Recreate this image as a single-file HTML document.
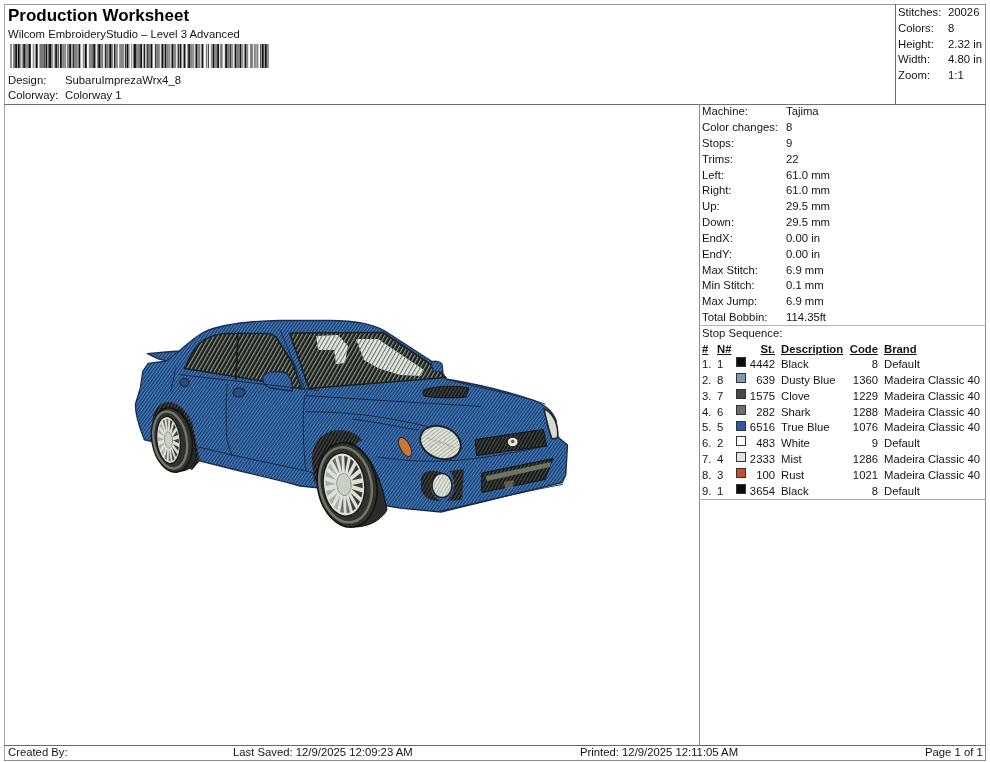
<!DOCTYPE html>
<html><head><meta charset="utf-8">
<style>
html,body{margin:0;padding:0;background:#fff;}
body{width:990px;height:762px;position:relative;overflow:hidden;will-change:transform;font-family:"Liberation Sans",sans-serif;font-size:11.3px;color:#141414;}
.ln{position:absolute;background:#7a7a7a;}
.t{position:absolute;white-space:pre;line-height:13px;}
.r{text-align:right;}
.b{font-weight:bold;text-decoration:underline;}
.sw{position:absolute;left:736px;width:8px;height:8px;border:1px solid #333;}
#car{position:absolute;left:0;top:0;}
</style></head><body>
<!-- frame lines -->
<div class="ln" style="left:4px;top:4px;width:982px;height:1px;background:#9a9a9a"></div>
<div class="ln" style="left:4px;top:4px;width:1px;height:757px;background:#a8a8a8"></div>
<div class="ln" style="left:985px;top:4px;width:1px;height:757px;background:#8c8c8c"></div>
<div class="ln" style="left:4px;top:760px;width:982px;height:1px;background:#8c8c8c"></div>
<div class="ln" style="left:4px;top:104px;width:982px;height:1px;background:#707070"></div>
<div class="ln" style="left:895px;top:4px;width:1px;height:100px;background:#6a6a6a"></div>
<div class="ln" style="left:699px;top:104px;width:1px;height:641px;background:#8c8c8c"></div>
<div class="ln" style="left:4px;top:745px;width:982px;height:1px;background:#6a6a6a"></div>
<div class="ln" style="left:699px;top:325px;width:287px;height:1px;background:#b4b4b4"></div>
<div class="ln" style="left:699px;top:499px;width:287px;height:1px;background:#a8a8a8"></div>

<!-- header -->
<div class="t" style="left:8px;top:6px;font-size:17px;font-weight:bold;line-height:20px;color:#000">Production Worksheet</div>
<div class="t" style="left:8px;top:28px;">Wilcom EmbroideryStudio – Level 3 Advanced</div>
<svg id="barcode" style="position:absolute;left:8px;top:44px;" width="270" height="24"><rect x="2" width="1" height="24" fill="#8c8c8c"/><rect x="3" width="1" height="24" fill="#969696"/><rect x="5" width="1" height="24" fill="#8c8c8c"/><rect x="6" width="1" height="24" fill="#787878"/><rect x="7" width="1" height="24" fill="#3c3c3c"/><rect x="8" width="1" height="24" fill="#141414"/><rect x="9" width="1" height="24" fill="#aaaaaa"/><rect x="10" width="1" height="24" fill="#0a0a0a"/><rect x="11" width="1" height="24" fill="#505050"/><rect x="12" width="1" height="24" fill="#a0a0a0"/><rect x="13" width="1" height="24" fill="#c8c8c8"/><rect x="14" width="1" height="24" fill="#969696"/><rect x="15" width="1" height="24" fill="#464646"/><rect x="16" width="1" height="24" fill="#1e1e1e"/><rect x="17" width="1" height="24" fill="#787878"/><rect x="18" width="2" height="24" fill="#8c8c8c"/><rect x="20" width="1" height="24" fill="#6e6e6e"/><rect x="21" width="1" height="24" fill="#141414"/><rect x="22" width="1" height="24" fill="#3c3c3c"/><rect x="24" width="1" height="24" fill="#dcdcdc"/><rect x="25" width="1" height="24" fill="#969696"/><rect x="26" width="1" height="24" fill="#d2d2d2"/><rect x="27" width="1" height="24" fill="#969696"/><rect x="28" width="1" height="24" fill="#141414"/><rect x="29" width="1" height="24" fill="#505050"/><rect x="31" width="1" height="24" fill="#aaaaaa"/><rect x="32" width="1" height="24" fill="#787878"/><rect x="33" width="1" height="24" fill="#6e6e6e"/><rect x="34" width="1" height="24" fill="#828282"/><rect x="35" width="1" height="24" fill="#787878"/><rect x="36" width="1" height="24" fill="#464646"/><rect x="37" width="1" height="24" fill="#828282"/><rect x="38" width="1" height="24" fill="#141414"/><rect x="39" width="1" height="24" fill="#a0a0a0"/><rect x="40" width="1" height="24" fill="#6e6e6e"/><rect x="41" width="1" height="24" fill="#1e1e1e"/><rect x="42" width="1" height="24" fill="#141414"/><rect x="43" width="1" height="24" fill="#828282"/><rect x="44" width="1" height="24" fill="#969696"/><rect x="45" width="1" height="24" fill="#e6e6e6"/><rect x="46" width="1" height="24" fill="#aaaaaa"/><rect x="47" width="1" height="24" fill="#3c3c3c"/><rect x="48" width="1" height="24" fill="#1e1e1e"/><rect x="49" width="1" height="24" fill="#969696"/><rect x="50" width="1" height="24" fill="#646464"/><rect x="51" width="1" height="24" fill="#e6e6e6"/><rect x="52" width="1" height="24" fill="#141414"/><rect x="53" width="1" height="24" fill="#3c3c3c"/><rect x="54" width="1" height="24" fill="#969696"/><rect x="55" width="1" height="24" fill="#828282"/><rect x="56" width="1" height="24" fill="#969696"/><rect x="57" width="1" height="24" fill="#828282"/><rect x="58" width="1" height="24" fill="#e6e6e6"/><rect x="59" width="1" height="24" fill="#828282"/><rect x="60" width="1" height="24" fill="#8c8c8c"/><rect x="61" width="1" height="24" fill="#3c3c3c"/><rect x="62" width="1" height="24" fill="#141414"/><rect x="63" width="1" height="24" fill="#aaaaaa"/><rect x="64" width="1" height="24" fill="#969696"/><rect x="65" width="1" height="24" fill="#323232"/><rect x="66" width="3" height="24" fill="#828282"/><rect x="69" width="1" height="24" fill="#969696"/><rect x="70" width="1" height="24" fill="#828282"/><rect x="71" width="1" height="24" fill="#141414"/><rect x="72" width="1" height="24" fill="#aaaaaa"/><rect x="74" width="1" height="24" fill="#dcdcdc"/><rect x="75" width="1" height="24" fill="#8c8c8c"/><rect x="76" width="1" height="24" fill="#a0a0a0"/><rect x="77" width="1" height="24" fill="#141414"/><rect x="78" width="1" height="24" fill="#3c3c3c"/><rect x="80" width="1" height="24" fill="#e6e6e6"/><rect x="81" width="1" height="24" fill="#828282"/><rect x="82" width="1" height="24" fill="#8c8c8c"/><rect x="83" width="1" height="24" fill="#828282"/><rect x="84" width="1" height="24" fill="#787878"/><rect x="85" width="1" height="24" fill="#464646"/><rect x="86" width="1" height="24" fill="#141414"/><rect x="87" width="1" height="24" fill="#969696"/><rect x="88" width="1" height="24" fill="#e6e6e6"/><rect x="89" width="1" height="24" fill="#969696"/><rect x="90" width="1" height="24" fill="#3c3c3c"/><rect x="91" width="1" height="24" fill="#141414"/><rect x="92" width="1" height="24" fill="#787878"/><rect x="93" width="1" height="24" fill="#8c8c8c"/><rect x="94" width="1" height="24" fill="#787878"/><rect x="95" width="1" height="24" fill="#e6e6e6"/><rect x="96" width="1" height="24" fill="#c8c8c8"/><rect x="97" width="1" height="24" fill="#282828"/><rect x="98" width="2" height="24" fill="#787878"/><rect x="100" width="1" height="24" fill="#969696"/><rect x="101" width="1" height="24" fill="#505050"/><rect x="102" width="1" height="24" fill="#141414"/><rect x="103" width="1" height="24" fill="#6e6e6e"/><rect x="104" width="1" height="24" fill="#8c8c8c"/><rect x="105" width="1" height="24" fill="#e6e6e6"/><rect x="106" width="1" height="24" fill="#282828"/><rect x="107" width="1" height="24" fill="#787878"/><rect x="108" width="1" height="24" fill="#8c8c8c"/><rect x="109" width="1" height="24" fill="#969696"/><rect x="111" width="1" height="24" fill="#969696"/><rect x="112" width="1" height="24" fill="#8c8c8c"/><rect x="113" width="1" height="24" fill="#828282"/><rect x="114" width="2" height="24" fill="#8c8c8c"/><rect x="116" width="1" height="24" fill="#dcdcdc"/><rect x="117" width="1" height="24" fill="#323232"/><rect x="118" width="1" height="24" fill="#828282"/><rect x="119" width="1" height="24" fill="#141414"/><rect x="120" width="1" height="24" fill="#828282"/><rect x="121" width="1" height="24" fill="#b4b4b4"/><rect x="123" width="1" height="24" fill="#969696"/><rect x="124" width="1" height="24" fill="#dcdcdc"/><rect x="125" width="1" height="24" fill="#828282"/><rect x="126" width="1" height="24" fill="#141414"/><rect x="127" width="1" height="24" fill="#1e1e1e"/><rect x="128" width="1" height="24" fill="#828282"/><rect x="129" width="1" height="24" fill="#8c8c8c"/><rect x="130" width="2" height="24" fill="#828282"/><rect x="132" width="1" height="24" fill="#3c3c3c"/><rect x="133" width="1" height="24" fill="#141414"/><rect x="134" width="1" height="24" fill="#dcdcdc"/><rect x="135" width="1" height="24" fill="#969696"/><rect x="136" width="1" height="24" fill="#1e1e1e"/><rect x="137" width="1" height="24" fill="#c8c8c8"/><rect x="138" width="1" height="24" fill="#a0a0a0"/><rect x="139" width="1" height="24" fill="#3c3c3c"/><rect x="140" width="1" height="24" fill="#787878"/><rect x="141" width="1" height="24" fill="#828282"/><rect x="142" width="1" height="24" fill="#6e6e6e"/><rect x="143" width="1" height="24" fill="#141414"/><rect x="144" width="1" height="24" fill="#8c8c8c"/><rect x="146" width="1" height="24" fill="#dcdcdc"/><rect x="147" width="1" height="24" fill="#3c3c3c"/><rect x="148" width="1" height="24" fill="#8c8c8c"/><rect x="149" width="1" height="24" fill="#787878"/><rect x="150" width="1" height="24" fill="#828282"/><rect x="151" width="1" height="24" fill="#969696"/><rect x="152" width="1" height="24" fill="#e6e6e6"/><rect x="153" width="1" height="24" fill="#787878"/><rect x="154" width="1" height="24" fill="#141414"/><rect x="155" width="1" height="24" fill="#828282"/><rect x="156" width="1" height="24" fill="#969696"/><rect x="157" width="1" height="24" fill="#141414"/><rect x="158" width="1" height="24" fill="#8c8c8c"/><rect x="159" width="1" height="24" fill="#828282"/><rect x="160" width="1" height="24" fill="#969696"/><rect x="161" width="1" height="24" fill="#8c8c8c"/><rect x="162" width="1" height="24" fill="#c8c8c8"/><rect x="163" width="1" height="24" fill="#828282"/><rect x="164" width="1" height="24" fill="#141414"/><rect x="165" width="1" height="24" fill="#787878"/><rect x="166" width="1" height="24" fill="#8c8c8c"/><rect x="167" width="1" height="24" fill="#828282"/><rect x="168" width="1" height="24" fill="#e6e6e6"/><rect x="169" width="1" height="24" fill="#a0a0a0"/><rect x="170" width="1" height="24" fill="#323232"/><rect x="171" width="1" height="24" fill="#969696"/><rect x="172" width="1" height="24" fill="#141414"/><rect x="173" width="1" height="24" fill="#8c8c8c"/><rect x="174" width="1" height="24" fill="#e6e6e6"/><rect x="175" width="1" height="24" fill="#8c8c8c"/><rect x="176" width="1" height="24" fill="#141414"/><rect x="177" width="1" height="24" fill="#828282"/><rect x="179" width="1" height="24" fill="#a0a0a0"/><rect x="180" width="1" height="24" fill="#3c3c3c"/><rect x="181" width="1" height="24" fill="#1e1e1e"/><rect x="182" width="1" height="24" fill="#8c8c8c"/><rect x="183" width="1" height="24" fill="#828282"/><rect x="184" width="1" height="24" fill="#969696"/><rect x="185" width="1" height="24" fill="#8c8c8c"/><rect x="186" width="1" height="24" fill="#dcdcdc"/><rect x="187" width="1" height="24" fill="#787878"/><rect x="188" width="1" height="24" fill="#141414"/><rect x="189" width="1" height="24" fill="#828282"/><rect x="190" width="1" height="24" fill="#8c8c8c"/><rect x="191" width="1" height="24" fill="#828282"/><rect x="192" width="1" height="24" fill="#d2d2d2"/><rect x="193" width="1" height="24" fill="#8c8c8c"/><rect x="194" width="1" height="24" fill="#141414"/><rect x="195" width="1" height="24" fill="#969696"/><rect x="197" width="1" height="24" fill="#e6e6e6"/><rect x="198" width="1" height="24" fill="#787878"/><rect x="199" width="1" height="24" fill="#c8c8c8"/><rect x="200" width="1" height="24" fill="#464646"/><rect x="202" width="1" height="24" fill="#e6e6e6"/><rect x="203" width="1" height="24" fill="#8c8c8c"/><rect x="204" width="1" height="24" fill="#828282"/><rect x="205" width="1" height="24" fill="#141414"/><rect x="206" width="1" height="24" fill="#787878"/><rect x="207" width="1" height="24" fill="#8c8c8c"/><rect x="208" width="1" height="24" fill="#828282"/><rect x="209" width="1" height="24" fill="#3c3c3c"/><rect x="210" width="1" height="24" fill="#141414"/><rect x="211" width="1" height="24" fill="#dcdcdc"/><rect x="212" width="1" height="24" fill="#8c8c8c"/><rect x="213" width="1" height="24" fill="#828282"/><rect x="214" width="1" height="24" fill="#a0a0a0"/><rect x="216" width="1" height="24" fill="#dcdcdc"/><rect x="217" width="1" height="24" fill="#3c3c3c"/><rect x="218" width="1" height="24" fill="#141414"/><rect x="219" width="1" height="24" fill="#828282"/><rect x="220" width="1" height="24" fill="#787878"/><rect x="221" width="1" height="24" fill="#8c8c8c"/><rect x="222" width="1" height="24" fill="#3c3c3c"/><rect x="223" width="2" height="24" fill="#969696"/><rect x="225" width="1" height="24" fill="#e6e6e6"/><rect x="226" width="1" height="24" fill="#969696"/><rect x="227" width="1" height="24" fill="#141414"/><rect x="228" width="1" height="24" fill="#787878"/><rect x="229" width="1" height="24" fill="#828282"/><rect x="230" width="1" height="24" fill="#787878"/><rect x="231" width="1" height="24" fill="#828282"/><rect x="232" width="1" height="24" fill="#141414"/><rect x="233" width="1" height="24" fill="#8c8c8c"/><rect x="234" width="1" height="24" fill="#969696"/><rect x="235" width="1" height="24" fill="#d2d2d2"/><rect x="236" width="1" height="24" fill="#8c8c8c"/><rect x="237" width="1" height="24" fill="#141414"/><rect x="238" width="1" height="24" fill="#828282"/><rect x="239" width="1" height="24" fill="#8c8c8c"/><rect x="240" width="1" height="24" fill="#dcdcdc"/><rect x="242" width="1" height="24" fill="#828282"/><rect x="243" width="1" height="24" fill="#787878"/><rect x="244" width="1" height="24" fill="#8c8c8c"/><rect x="245" width="1" height="24" fill="#e6e6e6"/><rect x="246" width="1" height="24" fill="#828282"/><rect x="247" width="1" height="24" fill="#969696"/><rect x="248" width="1" height="24" fill="#aaaaaa"/><rect x="249" width="1" height="24" fill="#828282"/><rect x="250" width="1" height="24" fill="#d2d2d2"/><rect x="252" width="1" height="24" fill="#5a5a5a"/><rect x="253" width="1" height="24" fill="#969696"/><rect x="254" width="1" height="24" fill="#141414"/><rect x="255" width="1" height="24" fill="#505050"/><rect x="256" width="1" height="24" fill="#a0a0a0"/><rect x="257" width="1" height="24" fill="#0a0a0a"/><rect x="258" width="1" height="24" fill="#505050"/><rect x="259" width="1" height="24" fill="#8c8c8c"/><rect x="260" width="1" height="24" fill="#969696"/></svg>
<div class="t" style="left:8px;top:74px;">Design:</div>
<div class="t" style="left:65px;top:74px;">SubaruImprezaWrx4_8</div>
<div class="t" style="left:8px;top:89px;">Colorway:</div>
<div class="t" style="left:65px;top:89px;">Colorway 1</div>

<div class="t" style="left:898px;top:6.1px;">Stitches:</div><div class="t" style="left:948px;top:6.1px;">20026</div>
<div class="t" style="left:898px;top:22px;">Colors:</div><div class="t" style="left:948px;top:22px;">8</div>
<div class="t" style="left:898px;top:37.7px;">Height:</div><div class="t" style="left:948px;top:37.7px;">2.32 in</div>
<div class="t" style="left:898px;top:53.1px;">Width:</div><div class="t" style="left:948px;top:53.1px;">4.80 in</div>
<div class="t" style="left:898px;top:69px;">Zoom:</div><div class="t" style="left:948px;top:69px;">1:1</div>

<!-- right panel -->
<div class="t" style="left:702px;top:105px;">Machine:</div><div class="t" style="left:786px;top:105px;">Tajima</div>
<div class="t" style="left:702px;top:121px;">Color changes:</div><div class="t" style="left:786px;top:121px;">8</div>
<div class="t" style="left:702px;top:137px;">Stops:</div><div class="t" style="left:786px;top:137px;">9</div>
<div class="t" style="left:702px;top:153px;">Trims:</div><div class="t" style="left:786px;top:153px;">22</div>
<div class="t" style="left:702px;top:169px;">Left:</div><div class="t" style="left:786px;top:169px;">61.0 mm</div>
<div class="t" style="left:702px;top:184px;">Right:</div><div class="t" style="left:786px;top:184px;">61.0 mm</div>
<div class="t" style="left:702px;top:200px;">Up:</div><div class="t" style="left:786px;top:200px;">29.5 mm</div>
<div class="t" style="left:702px;top:216px;">Down:</div><div class="t" style="left:786px;top:216px;">29.5 mm</div>
<div class="t" style="left:702px;top:232px;">EndX:</div><div class="t" style="left:786px;top:232px;">0.00 in</div>
<div class="t" style="left:702px;top:248px;">EndY:</div><div class="t" style="left:786px;top:248px;">0.00 in</div>
<div class="t" style="left:702px;top:264px;">Max Stitch:</div><div class="t" style="left:786px;top:264px;">6.9 mm</div>
<div class="t" style="left:702px;top:279px;">Min Stitch:</div><div class="t" style="left:786px;top:279px;">0.1 mm</div>
<div class="t" style="left:702px;top:295px;">Max Jump:</div><div class="t" style="left:786px;top:295px;">6.9 mm</div>
<div class="t" style="left:702px;top:311px;">Total Bobbin:</div><div class="t" style="left:786px;top:311px;">114.35ft</div>
<div class="t" style="left:702px;top:327px;">Stop Sequence:</div>
<div class="t b" style="left:702px;top:343px;">#</div><div class="t b" style="left:717px;top:343px;">N#</div><div class="t b r" style="left:735px;width:40px;top:343px;">St.</div><div class="t b" style="left:781px;top:343px;">Description</div><div class="t b r" style="left:838px;width:40px;top:343px;">Code</div><div class="t b" style="left:884px;top:343px;">Brand</div>
<div class="t" style="left:702px;top:358px;">1.</div><div class="t" style="left:717px;top:358px;">1</div><div class="sw" style="top:357px;background:#0b0b0b;"></div><div class="t r" style="left:735px;width:40px;top:358px;">4442</div><div class="t" style="left:781px;top:358px;">Black</div><div class="t r" style="left:838px;width:40px;top:358px;">8</div><div class="t" style="left:884px;top:358px;">Default</div>
<div class="t" style="left:702px;top:374px;">2.</div><div class="t" style="left:717px;top:374px;">8</div><div class="sw" style="top:373px;background:#7f9bb9;"></div><div class="t r" style="left:735px;width:40px;top:374px;">639</div><div class="t" style="left:781px;top:374px;">Dusty Blue</div><div class="t r" style="left:838px;width:40px;top:374px;">1360</div><div class="t" style="left:884px;top:374px;">Madeira Classic 40</div>
<div class="t" style="left:702px;top:390px;">3.</div><div class="t" style="left:717px;top:390px;">7</div><div class="sw" style="top:389px;background:#46484b;"></div><div class="t r" style="left:735px;width:40px;top:390px;">1575</div><div class="t" style="left:781px;top:390px;">Clove</div><div class="t r" style="left:838px;width:40px;top:390px;">1229</div><div class="t" style="left:884px;top:390px;">Madeira Classic 40</div>
<div class="t" style="left:702px;top:406px;">4.</div><div class="t" style="left:717px;top:406px;">6</div><div class="sw" style="top:405px;background:#6c6d70;"></div><div class="t r" style="left:735px;width:40px;top:406px;">282</div><div class="t" style="left:781px;top:406px;">Shark</div><div class="t r" style="left:838px;width:40px;top:406px;">1288</div><div class="t" style="left:884px;top:406px;">Madeira Classic 40</div>
<div class="t" style="left:702px;top:421px;">5.</div><div class="t" style="left:717px;top:421px;">5</div><div class="sw" style="top:421px;background:#2a5aa8;"></div><div class="t r" style="left:735px;width:40px;top:421px;">6516</div><div class="t" style="left:781px;top:421px;">True Blue</div><div class="t r" style="left:838px;width:40px;top:421px;">1076</div><div class="t" style="left:884px;top:421px;">Madeira Classic 40</div>
<div class="t" style="left:702px;top:437px;">6.</div><div class="t" style="left:717px;top:437px;">2</div><div class="sw" style="top:436px;background:#ffffff;"></div><div class="t r" style="left:735px;width:40px;top:437px;">483</div><div class="t" style="left:781px;top:437px;">White</div><div class="t r" style="left:838px;width:40px;top:437px;">9</div><div class="t" style="left:884px;top:437px;">Default</div>
<div class="t" style="left:702px;top:453px;">7.</div><div class="t" style="left:717px;top:453px;">4</div><div class="sw" style="top:452px;background:#e2e2e2;"></div><div class="t r" style="left:735px;width:40px;top:453px;">2333</div><div class="t" style="left:781px;top:453px;">Mist</div><div class="t r" style="left:838px;width:40px;top:453px;">1286</div><div class="t" style="left:884px;top:453px;">Madeira Classic 40</div>
<div class="t" style="left:702px;top:469px;">8.</div><div class="t" style="left:717px;top:469px;">3</div><div class="sw" style="top:468px;background:#c24f27;"></div><div class="t r" style="left:735px;width:40px;top:469px;">100</div><div class="t" style="left:781px;top:469px;">Rust</div><div class="t r" style="left:838px;width:40px;top:469px;">1021</div><div class="t" style="left:884px;top:469px;">Madeira Classic 40</div>
<div class="t" style="left:702px;top:485px;">9.</div><div class="t" style="left:717px;top:485px;">1</div><div class="sw" style="top:484px;background:#0b0b0b;"></div><div class="t r" style="left:735px;width:40px;top:485px;">3654</div><div class="t" style="left:781px;top:485px;">Black</div><div class="t r" style="left:838px;width:40px;top:485px;">8</div><div class="t" style="left:884px;top:485px;">Default</div>

<!-- footer -->
<div class="t" style="left:8px;top:745.6px;">Created By:</div>
<div class="t" style="left:233px;top:745.6px;">Last Saved: 12/9/2025 12:09:23 AM</div>
<div class="t" style="left:580px;top:745.6px;">Printed: 12/9/2025 12:11:05 AM</div>
<div class="t" style="left:925px;top:745.6px;">Page 1 of 1</div>

<!-- CAR -->
<svg id="car" width="700" height="745" viewBox="0 0 700 745" style="position:absolute;left:0;top:0">
<defs>
<pattern id="bs" width="2.6" height="2.6" patternUnits="userSpaceOnUse" patternTransform="rotate(36)">
<rect width="2.6" height="2.6" fill="#4a81bf"/><rect width="1.35" height="2.6" fill="#163b6e"/></pattern>
<pattern id="ws" width="3.6" height="3.6" patternUnits="userSpaceOnUse" patternTransform="rotate(30)">
<rect width="3.6" height="3.6" fill="#1b1f1d"/><rect width="1.2" height="3.6" fill="#8f9486"/></pattern>
<pattern id="ds" width="3" height="3" patternUnits="userSpaceOnUse" patternTransform="rotate(30)">
<rect width="3" height="3" fill="#1a1c1c"/><rect width="1" height="3" fill="#4a4c48"/></pattern>
<pattern id="rs" width="3.6" height="3.6" patternUnits="userSpaceOnUse" patternTransform="rotate(30)">
<rect width="3.6" height="3.6" fill="#e4e8e2"/><rect width="1.1" height="3.6" fill="#6d726a"/></pattern>
<pattern id="ls" width="3" height="3" patternUnits="userSpaceOnUse" patternTransform="rotate(30)">
<rect width="3" height="3" fill="#dfe3da"/><rect width="0.8" height="3" fill="#9ea399"/></pattern>
</defs>
<g stroke-linejoin="round" stroke-linecap="round">
<path fill="url(#bs)" stroke="#1a2d4c" stroke-width="1.3" d="M147.3,353.7 L166,352 L179,351 C186,345 195,337 204,332 C220,325 245,321 280,320.5 L330,320.5 C355,321 370,323 385,331 L432,361.5 L437,362 L446,379 C470,383 500,389 533,400 C545,405 552,410 556,420 L558,437 L567.5,445 L565.8,475 L562.3,482.5 L488,500.5 L441,512 L400,508 L382,505 L320,488 L300,486 L285,481.8 L238,470.5 L199.4,460.8 L151,441.4 L144.4,439.8 C138,425 135,410 135.5,404 L140.4,387.6 L142.8,371.4 L148.2,363.4 L166.6,361 L158.3,358.8 Z"/>
<path fill="none" stroke="#1a2d4c" stroke-width="1" d="M166.6,361 L179,351 M171,391 C173,380 175,372 176,368"/>
<path fill="url(#ws)" stroke="#1c2222" stroke-width="1.6" d="M184.5,368.5 C188,360 193,350 200,343 C207,337 214,334.5 225,333.5 L268,333.5 C272,334 274,335 276,337 L292,362 L302,389 L259,380.5 Z"/>
<path fill="none" stroke="#1c2222" stroke-width="2" d="M238,333 L236,379"/>
<path fill="url(#ws)" stroke="#1c2222" stroke-width="1.6" d="M289.6,333 L383,332.5 L428,362.5 L446,377.5 L309,388.5 Z"/>
<path fill="none" stroke="#1a2d4c" stroke-width="1" d="M280,330 L307,394"/>
<path fill="url(#rs)" d="M316,336 L338,335 L348,346 L345,363 L336,364 L334,350 L318,350 Z"/>
<path fill="url(#rs)" d="M356,339 L378,339 L424,370 L421,376 L400,375 L378,368 L364,360 Z"/>
<path fill="url(#bs)" stroke="#1a2d4c" stroke-width="1.3" d="M263,378 C264,372 272,371 282,372 C290,373 293,382 292,391 L270,388 C265,386 262,383 263,378 Z"/>
<path fill="url(#bs)" stroke="#1a2d4c" stroke-width="1.2" d="M431,363 C434,360 440,361 442,364 L443,372 L433,371 Z"/>
<path fill="url(#ds)" stroke="#151515" stroke-width="1" d="M423.6,390 C435,386 455,385 469,388 L466,397 C450,398.5 435,398 424,396 Z"/>
<path fill="none" stroke="#16263f" stroke-width="1" opacity="0.9" d="
M227.2,384.2 C225.5,400 226,430 227.2,441 L232,455
M304.4,396.8 C302.5,420 303,450 306,470.8
M192.6,445.6 L232,455 L306,470.8 L316,474
M180,374.7 L318.6,390.5
M305.5,395.5 C340,398 391,401 480,406.4
M305.5,411.8 C340,412 372,413.6 427,426.4
M352.7,419 C380,423 400,427 418,430
M378,457 C390,459 405,460 418,461
M419,461 C450,462 480,460 546,446
M446,379 C470,386 520,395 545,404
M440,511 C470,505 520,492 562.5,484.5
"/>
<ellipse cx="239" cy="392.5" rx="6" ry="4.5" fill="#2d4d78" stroke="#16263f" stroke-width="1.2"/>
<ellipse cx="184.5" cy="382.5" rx="4.5" ry="4" fill="#2d4d78" stroke="#16263f" stroke-width="1.2"/>
<path fill="url(#ds)" d="M152,425 C152,412 158,403 168,402 C178,402 186,410 192,422 L200,461 L192,470 L160,455 Z"/>
<path fill="#2a2c28" stroke="#121212" stroke-width="1" d="M178,409 C189,417 196,437 196,458 C193,468 186,472 178,471 Z"/>
<ellipse cx="172" cy="440" rx="20" ry="32.5" transform="rotate(-10 172 440)" fill="#30322d" stroke="#111" stroke-width="1.5"/>
<ellipse cx="170.2" cy="440.0" rx="16.5" ry="28.8" transform="rotate(-10 170.2 440.0)" fill="none" stroke="#74766a" stroke-width="2.4"/>
<ellipse cx="168.5" cy="440" rx="12.5" ry="24.5" transform="rotate(-6 168.5 440)" fill="#1b1c1a"/>
<ellipse cx="168.5" cy="440" rx="11" ry="23" transform="rotate(-6 168.5 440)" fill="#dde2d8"/>
<path d="M173.0,440.5 L178.7,438.8 L178.9,443.3 Z" fill="#3a3d38"/>
<path d="M172.8,443.9 L178.8,447.0 L178.2,451.1 Z" fill="#3a3d38"/>
<path d="M172.0,446.8 L177.3,454.2 L175.9,457.2 Z" fill="#3a3d38"/>
<path d="M170.7,448.6 L174.5,459.2 L172.6,460.7 Z" fill="#3a3d38"/>
<path d="M169.0,449.1 L170.8,461.3 L168.6,461.0 Z" fill="#6a7067"/>
<path d="M167.3,448.3 L166.8,460.1 L164.6,458.2 Z" fill="#6a7067"/>
<path d="M165.7,446.1 L163.0,455.9 L161.2,452.5 Z" fill="#a9afa4"/>
<path d="M164.6,443.1 L160.0,449.3 L158.9,445.0 Z" fill="#a9afa4"/>
<path d="M164.0,439.5 L158.3,441.2 L158.1,436.7 Z" fill="#a9afa4"/>
<path d="M164.2,436.1 L158.2,433.0 L158.8,428.9 Z" fill="#a9afa4"/>
<path d="M165.0,433.2 L159.7,425.8 L161.1,422.8 Z" fill="#a9afa4"/>
<path d="M166.3,431.4 L162.5,420.8 L164.4,419.3 Z" fill="#6a7067"/>
<path d="M168.0,430.9 L166.2,418.7 L168.4,419.0 Z" fill="#6a7067"/>
<path d="M169.7,431.7 L170.2,419.9 L172.4,421.8 Z" fill="#3a3d38"/>
<path d="M171.3,433.9 L174.0,424.1 L175.8,427.5 Z" fill="#3a3d38"/>
<path d="M172.4,436.9 L177.0,430.7 L178.1,435.0 Z" fill="#3a3d38"/>
<ellipse cx="168.5" cy="440" rx="4.0" ry="8.3" transform="rotate(-6 168.5 440)" fill="#c9cfc4" stroke="#8a8f86" stroke-width="0.8"/>
<path fill="url(#ds)" d="M312,462 C311,446 320,433 334,430.5 C346,429 356,432 362,440 L352,446 L322,480 L314,482 Z"/>
<path fill="#2a2c28" stroke="#121212" stroke-width="1" d="M352,443 C369,452 381,476 387,510 C380,522 366,528 350,527 Z"/>
<ellipse cx="347" cy="485" rx="29.5" ry="42.5" transform="rotate(-10 347 485)" fill="#30322d" stroke="#111" stroke-width="1.5"/>
<ellipse cx="345.5" cy="484.8" rx="25.8" ry="37.8" transform="rotate(-10 345.5 484.8)" fill="none" stroke="#74766a" stroke-width="2.4"/>
<ellipse cx="344" cy="484.5" rx="21.5" ry="32.5" transform="rotate(-6 344 484.5)" fill="#1b1c1a"/>
<ellipse cx="344" cy="484.5" rx="20" ry="31" transform="rotate(-6 344 484.5)" fill="#dde2d8"/>
<path d="M352.0,484.9 L362.5,482.7 L362.7,488.2 Z" fill="#3a3d38"/>
<path d="M351.7,489.1 L362.4,492.6 L361.4,497.7 Z" fill="#3a3d38"/>
<path d="M350.5,492.7 L360.1,501.5 L357.9,505.6 Z" fill="#3a3d38"/>
<path d="M348.5,495.4 L355.8,508.4 L352.8,511.0 Z" fill="#3a3d38"/>
<path d="M345.9,496.7 L350.1,512.4 L346.6,513.2 Z" fill="#6a7067"/>
<path d="M343.1,496.6 L343.7,513.1 L340.1,511.9 Z" fill="#6a7067"/>
<path d="M340.4,495.0 L337.3,510.3 L334.1,507.3 Z" fill="#a9afa4"/>
<path d="M338.2,492.1 L331.7,504.3 L329.2,500.0 Z" fill="#a9afa4"/>
<path d="M336.6,488.4 L327.6,496.0 L326.2,490.8 Z" fill="#a9afa4"/>
<path d="M336.0,484.1 L325.5,486.3 L325.3,480.8 Z" fill="#a9afa4"/>
<path d="M336.3,479.9 L325.6,476.4 L326.6,471.3 Z" fill="#a9afa4"/>
<path d="M337.5,476.3 L327.9,467.5 L330.1,463.4 Z" fill="#a9afa4"/>
<path d="M339.5,473.6 L332.2,460.6 L335.2,458.0 Z" fill="#6a7067"/>
<path d="M342.1,472.3 L337.9,456.6 L341.4,455.8 Z" fill="#6a7067"/>
<path d="M344.9,472.4 L344.3,455.9 L347.9,457.1 Z" fill="#3a3d38"/>
<path d="M347.6,474.0 L350.7,458.7 L353.9,461.7 Z" fill="#3a3d38"/>
<path d="M349.8,476.9 L356.3,464.7 L358.8,469.0 Z" fill="#3a3d38"/>
<path d="M351.4,480.6 L360.4,473.0 L361.8,478.2 Z" fill="#3a3d38"/>
<ellipse cx="344" cy="484.5" rx="7.2" ry="11.2" transform="rotate(-6 344 484.5)" fill="#c9cfc4" stroke="#8a8f86" stroke-width="0.8"/>
<ellipse cx="440.5" cy="442.5" rx="21" ry="15.8" transform="rotate(22 440.5 442.5)" fill="url(#ls)" stroke="#1c2428" stroke-width="2"/>
<path fill="none" stroke="#a8ada4" stroke-width="0.8" d="M426,438 C436,441 448,444 455,448 M430,447 C438,440 446,440 452,451"/>
<path fill="#d8dcd2" stroke="#1c2428" stroke-width="1.5" d="M544,409 C553,412 559,425 557.5,438 L552,439 C548,428 546,418 544,409 Z"/>
<path fill="url(#ds)" stroke="#151515" stroke-width="1" d="M475.5,439.5 L543.4,429.4 L546.5,446 L477,455.5 Z"/>
<ellipse cx="512.7" cy="442" rx="5.5" ry="4.8" fill="#e5e8e0" stroke="#2a2a2a" stroke-width="1.2"/>
<circle cx="512.7" cy="441.5" r="1.8" fill="#555"/>
<path fill="url(#ds)" stroke="#151515" stroke-width="1" d="M482,473 L553,458.5 L545,479.5 L482,492.4 Z"/>
<path fill="#6c7560" d="M486,476 L551,462 L550,467 L487,481 Z"/>
<path fill="#7e8278" d="M504,482 L514,480 L513,488 L505,489 Z" opacity="0.6"/>
<path fill="url(#ds)" d="M421,478 C422,472 428,470 436,471 L443,472.5 C436,474 431,480 431,487 C431,494 436,499 441,500.5 C432,502 424,498 421,490 Z"/><path fill="url(#ds)" d="M449,471 L464,469 L462,500 L446,501 C452,497 454,491 454,485 C454,478 452,473 449,471 Z"/>
<ellipse cx="442" cy="485.5" rx="10" ry="12" fill="url(#ls)" stroke="#1c2428" stroke-width="1.5"/>
<ellipse cx="405" cy="447" rx="5" ry="10.5" transform="rotate(-28 405 447)" fill="#c9763a" stroke="#3a2a20" stroke-width="1"/>
</g></svg>

</body></html>
